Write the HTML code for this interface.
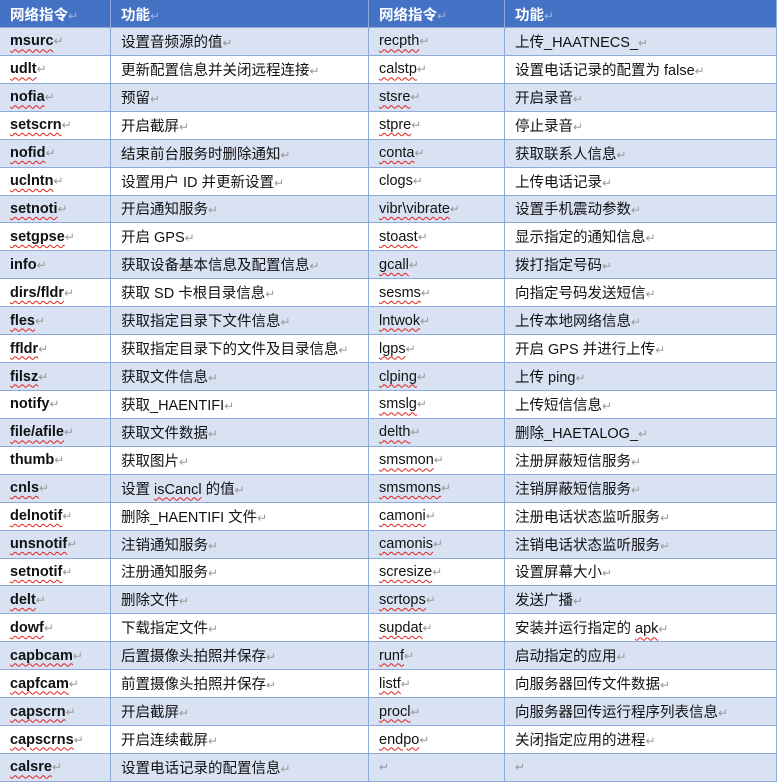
<!DOCTYPE html>
<html><head><meta charset="utf-8"><style>
body{margin:0;background:#fff;width:777px;height:784px;overflow:hidden}
table{position:absolute;left:-1px;top:0;border-collapse:collapse;table-layout:fixed;width:777px;font-family:"Liberation Sans","Noto Sans CJK SC",sans-serif;font-size:14.5px;color:#111}
td,th{border:1px solid #8eaadb;padding:0 0 0 10px;height:26.93px;white-space:nowrap;overflow:hidden;text-align:left;vertical-align:middle}
th{background:#4472c4;color:#fff;font-weight:bold;height:26px;border-color:#4472c4 #8eaadb #8eaadb #8eaadb}
tr:nth-child(even) td{background:#d9e2f3}
td:first-child{font-weight:bold}
.w{text-decoration:underline wavy #e02020;text-decoration-thickness:1px;text-underline-offset:3px}
.r{color:#999;font-weight:normal;font-size:12px}
</style></head><body>
<table>
<colgroup><col style="width:111px"><col style="width:258px"><col style="width:136px"><col style="width:272px"></colgroup>
<tr><th>网络指令<span class="r" style="color:#9db3e0">↵</span></th><th>功能<span class="r" style="color:#9db3e0">↵</span></th><th>网络指令<span class="r" style="color:#9db3e0">↵</span></th><th>功能<span class="r" style="color:#9db3e0">↵</span></th></tr>
<tr><td><span class="w">msurc</span><span class="r">↵</span></td><td>设置音频源的值<span class="r">↵</span></td><td><span class="w">recpth</span><span class="r">↵</span></td><td>上传_HAATNECS_<span class="r">↵</span></td></tr>
<tr><td><span class="w">udlt</span><span class="r">↵</span></td><td>更新配置信息并关闭远程连接<span class="r">↵</span></td><td><span class="w">calstp</span><span class="r">↵</span></td><td>设置电话记录的配置为 false<span class="r">↵</span></td></tr>
<tr><td><span class="w">nofia</span><span class="r">↵</span></td><td>预留<span class="r">↵</span></td><td><span class="w">stsre</span><span class="r">↵</span></td><td>开启录音<span class="r">↵</span></td></tr>
<tr><td><span class="w">setscrn</span><span class="r">↵</span></td><td>开启截屏<span class="r">↵</span></td><td><span class="w">stpre</span><span class="r">↵</span></td><td>停止录音<span class="r">↵</span></td></tr>
<tr><td><span class="w">nofid</span><span class="r">↵</span></td><td>结束前台服务时删除通知<span class="r">↵</span></td><td><span class="w">conta</span><span class="r">↵</span></td><td>获取联系人信息<span class="r">↵</span></td></tr>
<tr><td><span class="w">uclntn</span><span class="r">↵</span></td><td>设置用户 ID 并更新设置<span class="r">↵</span></td><td>clogs<span class="r">↵</span></td><td>上传电话记录<span class="r">↵</span></td></tr>
<tr><td><span class="w">setnoti</span><span class="r">↵</span></td><td>开启通知服务<span class="r">↵</span></td><td><span class="w">vibr\vibrate</span><span class="r">↵</span></td><td>设置手机震动参数<span class="r">↵</span></td></tr>
<tr><td><span class="w">setgpse</span><span class="r">↵</span></td><td>开启 GPS<span class="r">↵</span></td><td><span class="w">stoast</span><span class="r">↵</span></td><td>显示指定的通知信息<span class="r">↵</span></td></tr>
<tr><td>info<span class="r">↵</span></td><td>获取设备基本信息及配置信息<span class="r">↵</span></td><td><span class="w">gcall</span><span class="r">↵</span></td><td>拨打指定号码<span class="r">↵</span></td></tr>
<tr><td><span class="w">dirs/fldr</span><span class="r">↵</span></td><td>获取 SD 卡根目录信息<span class="r">↵</span></td><td><span class="w">sesms</span><span class="r">↵</span></td><td>向指定号码发送短信<span class="r">↵</span></td></tr>
<tr><td><span class="w">fles</span><span class="r">↵</span></td><td>获取指定目录下文件信息<span class="r">↵</span></td><td><span class="w">lntwok</span><span class="r">↵</span></td><td>上传本地网络信息<span class="r">↵</span></td></tr>
<tr><td><span class="w">ffldr</span><span class="r">↵</span></td><td>获取指定目录下的文件及目录信息<span class="r">↵</span></td><td><span class="w">lgps</span><span class="r">↵</span></td><td>开启 GPS 并进行上传<span class="r">↵</span></td></tr>
<tr><td><span class="w">filsz</span><span class="r">↵</span></td><td>获取文件信息<span class="r">↵</span></td><td><span class="w">clping</span><span class="r">↵</span></td><td>上传 ping<span class="r">↵</span></td></tr>
<tr><td>notify<span class="r">↵</span></td><td>获取_HAENTIFI<span class="r">↵</span></td><td><span class="w">smslg</span><span class="r">↵</span></td><td>上传短信信息<span class="r">↵</span></td></tr>
<tr><td><span class="w">file/afile</span><span class="r">↵</span></td><td>获取文件数据<span class="r">↵</span></td><td><span class="w">delth</span><span class="r">↵</span></td><td>删除_HAETALOG_<span class="r">↵</span></td></tr>
<tr><td>thumb<span class="r">↵</span></td><td>获取图片<span class="r">↵</span></td><td><span class="w">smsmon</span><span class="r">↵</span></td><td>注册屏蔽短信服务<span class="r">↵</span></td></tr>
<tr><td><span class="w">cnls</span><span class="r">↵</span></td><td>设置 <span class="w">isCancl</span> 的值<span class="r">↵</span></td><td><span class="w">smsmons</span><span class="r">↵</span></td><td>注销屏蔽短信服务<span class="r">↵</span></td></tr>
<tr><td><span class="w">delnotif</span><span class="r">↵</span></td><td>删除_HAENTIFI 文件<span class="r">↵</span></td><td><span class="w">camoni</span><span class="r">↵</span></td><td>注册电话状态监听服务<span class="r">↵</span></td></tr>
<tr><td><span class="w">unsnotif</span><span class="r">↵</span></td><td>注销通知服务<span class="r">↵</span></td><td><span class="w">camonis</span><span class="r">↵</span></td><td>注销电话状态监听服务<span class="r">↵</span></td></tr>
<tr><td><span class="w">setnotif</span><span class="r">↵</span></td><td>注册通知服务<span class="r">↵</span></td><td><span class="w">scresize</span><span class="r">↵</span></td><td>设置屏幕大小<span class="r">↵</span></td></tr>
<tr><td><span class="w">delt</span><span class="r">↵</span></td><td>删除文件<span class="r">↵</span></td><td><span class="w">scrtops</span><span class="r">↵</span></td><td>发送广播<span class="r">↵</span></td></tr>
<tr><td><span class="w">dowf</span><span class="r">↵</span></td><td>下载指定文件<span class="r">↵</span></td><td><span class="w">supdat</span><span class="r">↵</span></td><td>安装并运行指定的 <span class="w">apk</span><span class="r">↵</span></td></tr>
<tr><td><span class="w">capbcam</span><span class="r">↵</span></td><td>后置摄像头拍照并保存<span class="r">↵</span></td><td><span class="w">runf</span><span class="r">↵</span></td><td>启动指定的应用<span class="r">↵</span></td></tr>
<tr><td><span class="w">capfcam</span><span class="r">↵</span></td><td>前置摄像头拍照并保存<span class="r">↵</span></td><td><span class="w">listf</span><span class="r">↵</span></td><td>向服务器回传文件数据<span class="r">↵</span></td></tr>
<tr><td><span class="w">capscrn</span><span class="r">↵</span></td><td>开启截屏<span class="r">↵</span></td><td><span class="w">procl</span><span class="r">↵</span></td><td>向服务器回传运行程序列表信息<span class="r">↵</span></td></tr>
<tr><td><span class="w">capscrns</span><span class="r">↵</span></td><td>开启连续截屏<span class="r">↵</span></td><td><span class="w">endpo</span><span class="r">↵</span></td><td>关闭指定应用的进程<span class="r">↵</span></td></tr>
<tr><td><span class="w">calsre</span><span class="r">↵</span></td><td>设置电话记录的配置信息<span class="r">↵</span></td><td><span class="r">↵</span></td><td><span class="r">↵</span></td></tr>
</table>
</body></html>
